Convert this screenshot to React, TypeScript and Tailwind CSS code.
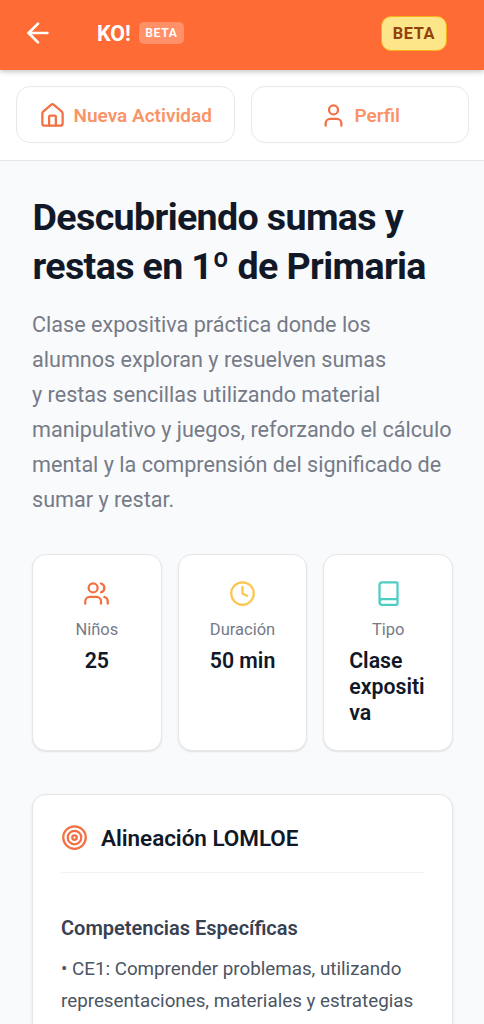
import type { ReactNode } from "react";
import { ArrowLeft, Book, Clock, House, Target, User, Users } from "lucide-react";

function NavButton({ icon, label }: { icon: ReactNode; label: string }) {
  return (
    <button className="flex h-[57px] flex-1 items-center justify-center gap-2 rounded-[14px] border border-[#e7e8eb] bg-white pt-px text-[19px] font-semibold text-[#fa9467]">
      {icon}
      <span className="pt-[2px]">{label}</span>
    </button>
  );
}

function StatCard({ icon, label, value }: { icon: ReactNode; label: string; value: string }) {
  return (
    <div className="flex h-[197px] flex-1 flex-col items-center rounded-[14px] border border-[#e5e7eb] bg-white px-6 pt-[25px] shadow-[0_1px_2px_rgba(0,0,0,0.10)]">
      {icon}
      <div className="mt-[13px] text-[16.5px] leading-[20px] text-[#757b87]">{label}</div>
      <div className="mt-[7.5px] max-w-[78px] text-[21.3px] leading-[26px] font-semibold wrap-anywhere text-[#111827]">
        {value}
      </div>
    </div>
  );
}

export default function App() {
  return (
    <div className="h-[1024px] overflow-hidden bg-[#f9fafc] font-['Roboto',sans-serif]">
      <header className="relative flex h-[70px] items-center bg-[#ff6b35] pr-[37px] pb-1 pl-[22px] text-white shadow-[0_2px_5px_rgba(0,0,0,0.22)]">
        <ArrowLeft size={32} strokeWidth={2} />
        <span className="ml-[43px] pt-[3px] text-[21.4px] font-bold">KO!</span>
        <span className="ml-[8px] flex h-[22px] w-[45px] items-center justify-center rounded-[5px] bg-white/25 pt-px text-[12.2px] font-semibold tracking-[0.6px]">
          BETA
        </span>
        <span className="ml-auto flex h-[35px] w-[66px] items-center justify-center rounded-[10px] border border-[#fbb017] bg-[#fde68a] pt-[2px] text-[16.3px] font-bold tracking-[0.6px] text-[#92400e]">
          BETA
        </span>
      </header>

      <nav className="flex h-[91px] gap-4 border-b border-[#e5e7eb] bg-white px-[16px] pt-[16px] pr-[15px]">
        <NavButton icon={<House size={27} color="#f27042" />} label="Nueva Actividad" />
        <NavButton icon={<User size={27} color="#f27042" />} label="Perfil" />
      </nav>

      <main className="px-8 pt-[32px] pr-[31px]">
        <h1 className="pl-[0.5px] text-[37.6px] leading-[48.5px] font-bold tracking-[-0.63px] whitespace-nowrap text-[#111827]">
          Descubriendo sumas y<br />restas en 1º de Primaria
        </h1>
        <p className="mt-[17px] text-[21.6px] leading-[35px] whitespace-nowrap text-[#757b87]">
          Clase expositiva práctica donde los<br />
          alumnos exploran y resuelven sumas<br />
          y restas sencillas utilizando material<br />
          manipulativo y juegos, reforzando el cálculo<br />
          mental y la comprensión del significado de<br />
          sumar y restar.
        </p>

        <section className="mt-[37px] flex gap-4">
          <StatCard icon={<Users size={27} color="#f27042" />} label="Niños" value="25" />
          <StatCard icon={<Clock size={27} color="#fbc64f" />} label="Duración" value="50 min" />
          <StatCard icon={<Book size={27} color="#4ecdc4" />} label="Tipo" value="Clase expositiva" />
        </section>

        <section className="mt-[43px] h-[300px] rounded-[14px] border border-[#e5e7eb] bg-white px-[28px] pt-[28px] shadow-[0_1px_3px_rgba(0,0,0,0.10)]">
          <div className="flex items-center gap-[13px] border-b border-[#f1f2f4] pb-[20px]">
            <Target size={27} color="#f27042" />
            <h2 className="pt-[2px] text-[22.5px] leading-[27px] font-semibold tracking-[-0.05px] text-[#111827]">
              Alineación LOMLOE
            </h2>
          </div>
          <h3 className="mt-[42px] text-[20px] leading-[26px] font-semibold text-[#374151]">
            Competencias Específicas
          </h3>
          <p className="mt-[12px] text-[18.8px] leading-[32px] whitespace-nowrap text-[#4b5563]">
            • CE1: Comprender problemas, utilizando<br />
            representaciones, materiales y estrategias
          </p>
        </section>
      </main>
    </div>
  );
}
